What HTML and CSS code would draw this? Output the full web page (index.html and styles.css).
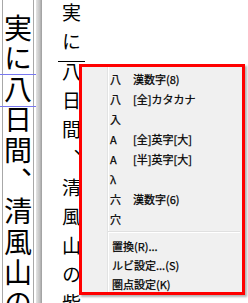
FILE: index.html
```html
<!DOCTYPE html>
<html lang="ja">

<head>
    <meta charset="UTF-8">
    <meta name="viewport" content="width=device-width, initial-scale=1.0">
    <title>ルビ設定メニュー</title>
    <link rel="stylesheet" href="styles.css">
</head>

<body>

    <div class="page">
        <div class="pane-left">
            <div class="vtext big">実に<span class="boxed">八</span>日間、清風山の</div>
        </div>
        <div class="splitter"></div>
        <div class="pane-main">
            <div class="vtext small">実に<span class="mark">八</span>日間、清風山の紫</div>
        </div>

        <!-- context menu, highlighted with a red frame -->
        <div class="menu-frame">
            <ul class="menu">
                <li class="item"><span class="glyph">八</span><span class="label">漢数字(8)</span></li>
                <li class="item"><span class="glyph">八</span><span class="label">[全]カタカナ</span></li>
                <li class="item"><span class="glyph">入</span></li>
                <li class="item"><span class="glyph">A</span><span class="label">[全]英字[大]</span></li>
                <li class="item"><span class="glyph">A</span><span class="label">[半]英字[大]</span></li>
                <li class="item"><span class="glyph">λ</span></li>
                <li class="item"><span class="glyph">六</span><span class="label">漢数字(6)</span></li>
                <li class="item"><span class="glyph">穴</span></li>
                <li class="sep"></li>
                <li class="item cmd">置換(R)...</li>
                <li class="item cmd">ルビ設定...(S)</li>
                <li class="item cmd">圏点設定(K)</li>
            </ul>
        </div>
    </div>

</body>

</html>
```

FILE: styles.css
```css
* {
    margin: 0;
    padding: 0;
    box-sizing: border-box;
}

body {
    background-color: #ffffff;
    font-family: "Noto Sans CJK JP", sans-serif;
    color: #000;
}

.page {
    position: relative;
    display: flex;
    width: 248px;
    height: 303px;
    overflow: hidden;
}

/* left preview pane */
.pane-left {
    margin-left: 2px;
    width: 32px;
    height: 100%;
    border-left: 1px solid #a8a8a8;
    border-right: 1px solid #a8a8a8;
    display: flex;
    justify-content: center;
}

.splitter {
    margin-left: 2px;
    width: 6px;
    height: 100%;
    background: linear-gradient(to right, #e4e4e4, #c4c4c4 60%, #9c9c9c);
}

.pane-main {
    flex: 1;
    height: 100%;
    padding-left: 17px;
}

.vtext {
    writing-mode: vertical-rl;
    white-space: nowrap;
}

.vtext.big {
    font-size: 28px;
    line-height: 30px;
    letter-spacing: 2.6px;
    padding-top: 14px;
}

.vtext.small {
    font-size: 19px;
    line-height: 24px;
    width: 24px;
    letter-spacing: 10px;
    padding-top: 3px;
}

.boxed {
    outline: 1px solid #7878f0;
}

.mark {
    border-top: 1px solid #000;
}

/* context menu */
.menu-frame {
    position: absolute;
    left: 79px;
    top: 64px;
    width: 166px;
    height: 231px;
    border: 3px solid #ff0000;
    background-color: #f0f0f0;
    box-shadow: 2px 2px 2px rgba(0, 0, 0, 0.3);
}

.menu {
    list-style: none;
    height: 100%;
    padding-top: 2px;
    background: linear-gradient(to right, transparent 25px, #e2e3e3 25px, #e2e3e3 26px, #ffffff 26px, #ffffff 27px, transparent 27px);
    font-size: 11px;
    -webkit-text-stroke: 0.25px #000;
}

.item {
    display: flex;
    align-items: center;
    height: 20px;
    padding-left: 28px;
}

.glyph {
    width: 23px;
}

.item.cmd {
    height: 19px;
    padding-left: 30px;
}

.sep {
    height: 7px;
    margin-left: 26px;
    margin-right: 2px;
    background: linear-gradient(to bottom, transparent 2px, #e0e0e0 2px, #e0e0e0 3px, #ffffff 3px, #ffffff 4px, transparent 4px);
}
```
